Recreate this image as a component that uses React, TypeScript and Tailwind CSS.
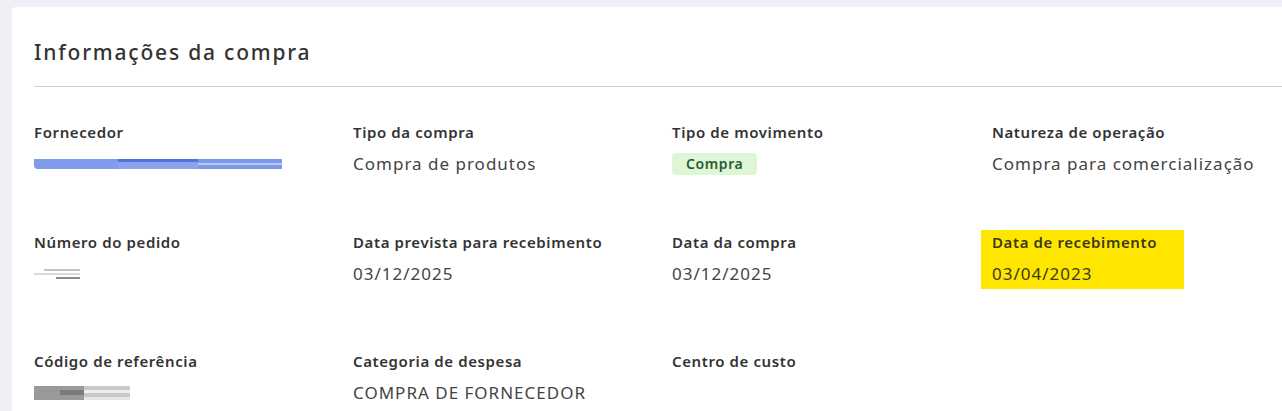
import React from 'react'

type Field = {
  label: string
  value?: React.ReactNode
  highlight?: boolean
}

function Redacted({ kind }: { kind: 'blue' | 'short' | 'gray' }) {
  if (kind === 'blue') {
    return (
      <div className="flex h-[24px] items-center">
        <div className="flex h-[10px] w-[248px]">
          <div className="h-full w-[84px] rounded-bl-sm bg-[#7f9bea]" />
          <div className="flex h-full w-[80px] flex-col">
            <div className="h-[3px] bg-[#4f72dc]" />
            <div className="h-[7px] bg-[#8aa5ee]" />
          </div>
          <div className="flex h-full w-[84px] flex-col">
            <div className="h-[4px] bg-[#7c98ea]" />
            <div className="h-[2px] bg-[#b9c8f5]" />
            <div className="h-[4px] bg-[#7c98ea]" />
          </div>
        </div>
      </div>
    )
  }
  if (kind === 'short') {
    return (
      <div className="flex h-[24px] items-center">
        <div className="flex w-[46px] flex-col gap-[2px]">
          <div className="ml-[10px] h-[2px] w-[36px] bg-[#c4c4c4]" />
          <div className="h-[2px] w-[46px] bg-[#d8d8d8]" />
          <div className="ml-[22px] h-[2px] w-[24px] bg-[#8a8a8a]" />
        </div>
      </div>
    )
  }
  return (
    <div className="flex h-[24px] items-center">
      <div className="flex h-[14px] w-[96px]">
        <div className="h-full w-[26px] bg-[#999999]" />
        <div className="flex h-full w-[24px] flex-col">
          <div className="h-[4px] bg-[#9a9a9a]" />
          <div className="h-[5px] bg-[#7a7a7a]" />
          <div className="h-[5px] bg-[#9a9a9a]" />
        </div>
        <div className="flex h-full w-[46px] flex-col">
          <div className="h-[4px] bg-[#c8c8c8]" />
          <div className="h-[3px] bg-[#eeeeee]" />
          <div className="h-[4px] bg-[#c8c8c8]" />
          <div className="h-[3px] bg-[#e6e6e6]" />
        </div>
      </div>
    </div>
  )
}

function Cell({ label, value, highlight }: Field) {
  return (
    <div className="flex">
      <div
        className={
          highlight
            ? '-ml-[11px] -mt-[2px] bg-[#ffe600] pt-[2px] pb-[3px] pl-[11px] pr-[27px]'
            : ''
        }
      >
        <div
          className={`text-[15px] font-semibold leading-[20px] tracking-[0.6px] ${highlight ? 'text-[#3b3a12]' : 'text-[#333333]'}`}
        >
          {label}
        </div>
        <div
          className={`mt-[10px] text-[17px] leading-[24px] tracking-[1px] ${highlight ? 'text-[#3b3a12]' : 'text-[#444444]'}`}
        >
          {value}
        </div>
      </div>
    </div>
  )
}

export default function App() {
  const rows: Field[][] = [
    [
      { label: 'Fornecedor', value: <Redacted kind="blue" /> },
      { label: 'Tipo da compra', value: 'Compra de produtos' },
      {
        label: 'Tipo de movimento',
        value: (
          <div className="flex h-[24px] items-center">
            <span className="rounded-[4px] bg-[#dcf6d6] px-[14px] text-[14px] font-semibold leading-[22px] tracking-[0.6px] text-[#2e5b31]">
              Compra
            </span>
          </div>
        ),
      },
      { label: 'Natureza de operação', value: 'Compra para comercialização' },
    ],
    [
      { label: 'Número do pedido', value: <Redacted kind="short" /> },
      { label: 'Data prevista para recebimento', value: '03/12/2025' },
      { label: 'Data da compra', value: '03/12/2025' },
      { label: 'Data de recebimento', value: '03/04/2023', highlight: true },
    ],
    [
      { label: 'Código de referência', value: <Redacted kind="gray" /> },
      { label: 'Categoria de despesa', value: 'COMPRA DE FORNECEDOR' },
      { label: 'Centro de custo', value: '' },
      { label: '' },
    ],
  ]

  const rowMargins = ['mt-[35px]', 'mt-[56px]', 'mt-[62px]']

  return (
    <div
      className="h-[411px] w-[1282px] overflow-hidden bg-[#eef0f5] pl-[12px] pt-[7px]"
      style={{ fontFamily: '"Noto Sans", "Open Sans", sans-serif' }}
    >
      <div className="h-[420px] rounded-tl-[4px] bg-white pl-[22px] pt-[31px]">
        <h1 className="text-[21px] font-medium leading-[28px] tracking-[1.8px] text-[#333333]">
          Informações da compra
        </h1>
        <div className="mt-[20px] h-px bg-[#c8d2e0]" />
        {rows.map((row, i) => (
          <div key={i} className={`grid grid-cols-[319px_319px_320px_1fr] ${rowMargins[i]}`}>
            {row.map((f, j) =>
              f.label ? <Cell key={j} {...f} /> : <div key={j} />
            )}
          </div>
        ))}
      </div>
    </div>
  )
}
